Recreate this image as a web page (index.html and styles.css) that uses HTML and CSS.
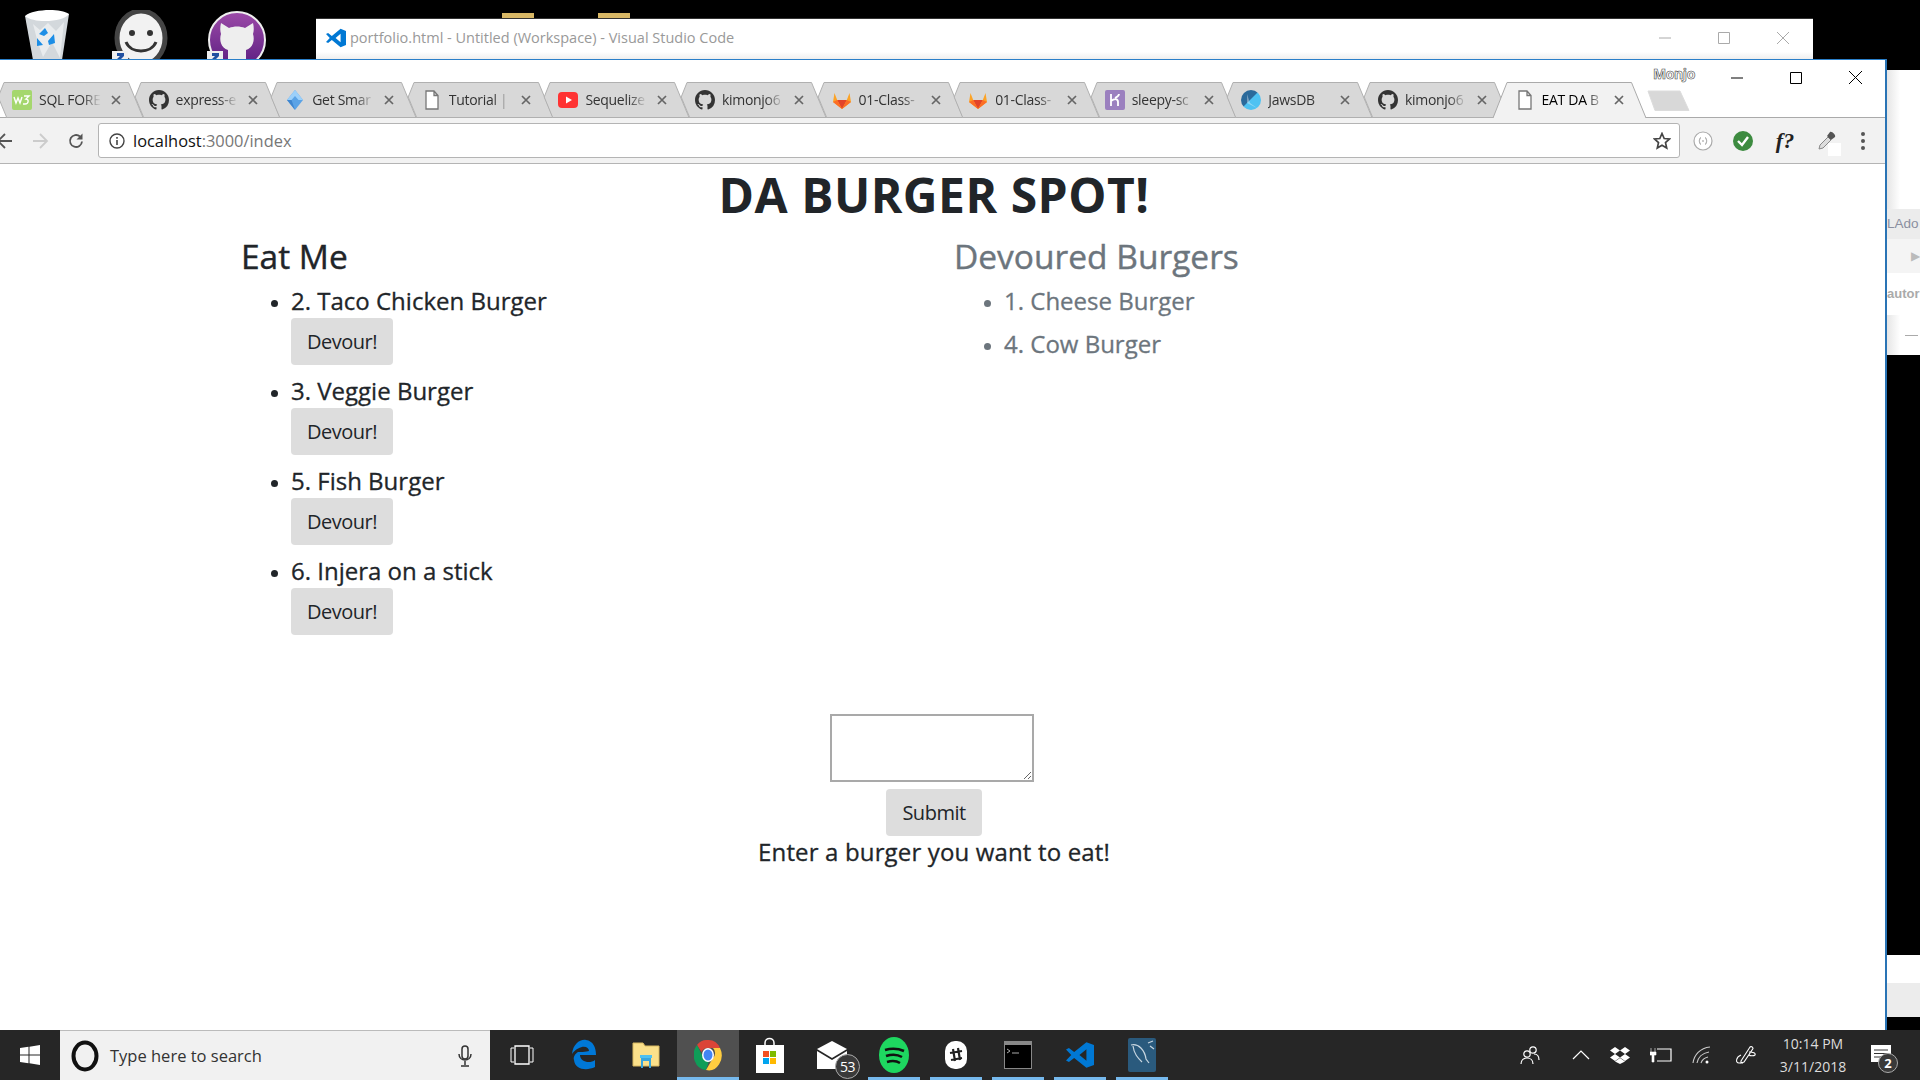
FILE: index.html
```html
<!DOCTYPE html>
<html lang="en">
<head>
<meta charset="utf-8">
<title>DA BURGER SPOT</title>
<link rel="stylesheet" href="styles.css">
</head>
<body>
<svg class="defs" width="0" height="0" aria-hidden="true">
  <symbol id="gh" viewBox="0 0 16 16"><path d="M8 0C3.58 0 0 3.58 0 8c0 3.54 2.29 6.53 5.47 7.59.4.07.55-.17.55-.38 0-.19-.01-.82-.01-1.49-2.01.37-2.53-.49-2.69-.94-.09-.23-.48-.94-.82-1.13-.28-.15-.68-.52-.01-.53.63-.01 1.08.58 1.23.82.72 1.21 1.87.87 2.33.66.07-.52.28-.87.51-1.07-1.78-.2-3.64-.89-3.64-3.95 0-.87.31-1.59.82-2.15-.08-.2-.36-1.02.08-2.12 0 0 .67-.21 2.2.82.64-.18 1.32-.27 2-.27.68 0 1.36.09 2 .27 1.53-1.04 2.2-.82 2.2-.82.44 1.1.16 1.92.08 2.12.51.56.82 1.27.82 2.15 0 3.07-1.87 3.75-3.65 3.95.29.25.54.73.54 1.48 0 1.07-.01 1.93-.01 2.2 0 .21.15.46.55.38A8.013 8.013 0 0016 8c0-4.42-3.58-8-8-8z" fill="currentColor"/></symbol>
  <symbol id="doc" viewBox="0 0 16 20"><path d="M2 1h8l4 4.5V19H2z M10 1v4.5h4" fill="#fff" stroke="#777" stroke-width="1.3"/></symbol>
  <symbol id="x" viewBox="0 0 12 12"><path d="M2 2l8 8M10 2l-8 8" stroke="#666" stroke-width="1.7" fill="none"/></symbol>
  <symbol id="fox" viewBox="0 0 20 20"><path d="M10 19L1 12l1.500-9 2.700 7h9.600l2.700-7 1.500 9z" fill="#fca326"/><path d="M10 19L5.200 10h9.600z" fill="#e24329"/><path d="M10 19L1 12l4.200-2zM10 19l9-7-4.200-2z" fill="#fc6d26"/></symbol>
  <symbol id="tabshape" viewBox="0 0 153 36" preserveAspectRatio="none"><path d="M14 .5H138.500L153 35.500H16.700L8.200 15z" fill="#d8d8d8" stroke="#b0b0b0"/></symbol>
  <symbol id="vsc" viewBox="0 0 24 24"><path d="M17.500 1L24 3.500v17L17.500 23 7 14.500 2.500 18 0 16.700 4.500 12 0 7.300 2.500 6 7 9.500zM17.500 7l-6 5 6 5z" fill="#0078d4"/></symbol>
</svg>

<div class="desktop">
  <div class="desk-icon recycle">
    <svg viewBox="0 0 46 50" width="46" height="50"><path d="M1 6l44-2-7 46H9z" fill="#d3d8dc"/><path d="M1 6C9-1 36-2 45 4c-5 8-35 10-44 2z" fill="#fff"/><path d="M9 14l7 6 8-7 8 8 8-9-4 36-8-16-9 15-5-14z" fill="#e9ecee"/><path d="M15 24l6-6 3 5-4 3zM30 24l1 9-6 2-1-4zM13 28l6 7-6 1z" fill="#1c8ee6"/></svg>
  </div>
  <div class="desk-icon smiley">
    <svg viewBox="0 0 54 50" width="54" height="50"><ellipse cx="27" cy="28" rx="24" ry="27" fill="#f2f2f2" stroke="#444" stroke-width="5"/><circle cx="18" cy="23" r="3" fill="#333"/><circle cx="36" cy="23" r="3" fill="#333"/><path d="M12 32c5 12 25 12 30 0" fill="none" stroke="#333" stroke-width="3"/></svg>
  </div>
  <div class="desk-icon ghcirc">
    <svg class="ghring" viewBox="0 0 60 50" width="60" height="50"><defs><linearGradient id="pg" x1="0" y1="0" x2="0" y2="1"><stop offset="0" stop-color="#9c4aa8"/><stop offset="1" stop-color="#5a1d80"/></linearGradient></defs><circle cx="30" cy="30" r="28" fill="url(#pg)" stroke="#eee" stroke-width="2"/><path d="M14 13l8 5c5-2 11-2 16 0l8-5c1 4 1 8 0 11 2 6 0 14-7 16v10H21V40c-7-2-9-10-7-16-1-3-1-7 0-11z" fill="#eee"/></svg>
  </div>
  <svg class="shortcut shortcut-a" width="16" height="8" viewBox="0 0 16 8"><path d="M0 0h16v8H0z" fill="#eee"/><path d="M5 8l3-3H5V2h7v3l-3 3z" fill="#1f4fa0"/></svg>
  <svg class="shortcut shortcut-b" width="16" height="8" viewBox="0 0 16 8"><path d="M0 0h16v8H0z" fill="#eee"/><path d="M5 8l3-3H5V2h7v3l-3 3z" fill="#1f4fa0"/></svg>
  <div class="desk-folder folder-a"></div>
  <div class="desk-folder folder-b"></div>

  <section class="vscode-window">
    <svg class="vs-logo" width="20" height="20"><use href="#vsc"/></svg>
    <span class="vs-title">portfolio.html - Untitled (Workspace) - Visual Studio Code</span>
    <div class="vs-controls">
      <svg width="12" height="12" viewBox="0 0 12 12"><path d="M0 6h12" stroke="#aaa"/></svg>
      <svg width="12" height="12" viewBox="0 0 12 12"><path d="M.5.5h11v11H.5z" fill="none" stroke="#aaa"/></svg>
      <svg width="12" height="12" viewBox="0 0 12 12"><path d="M0 0l12 12M12 0L0 12" stroke="#aaa"/></svg>
    </div>
  </section>

  <aside class="back-window">
    <div class="bw-head"></div>
    <div class="bw-row bw-title">LAdo</div>
    <div class="bw-row bw-arrow">▶</div>
    <div class="bw-row bw-text">autor</div>
    <div class="bw-row bw-dash"><span></span></div>
  </aside>
  <aside class="back-bottom"></aside>

  <section class="browser">
    <header class="titlebar">
      <span class="profile">Monjo</span>
      <div class="win-controls">
        <svg width="12" height="12" viewBox="0 0 12 12"><path d="M0 6h12" stroke="#000"/></svg>
        <svg width="12" height="12" viewBox="0 0 12 12"><path d="M.5.5h11v11H.5z" fill="none" stroke="#000"/></svg>
        <svg width="13" height="13" viewBox="0 0 13 13"><path d="M0 0l13 13M13 0L0 13" stroke="#000"/></svg>
      </div>
    </header>
    <div class="tabstrip">
      <div class="tab"><svg class="tab-bg"><use href="#tabshape"/></svg><svg class="fav" viewBox="0 0 20 20"><rect width="20" height="20" rx="2" fill="#a5d76e"/><path d="M2 7l2 6 2-5 2 5 2-6M12 6h5l-3 3c3 0 3 5-1 5h-2" fill="none" stroke="#fff" stroke-width="1.400"/></svg><span class="tab-name">SQL FORE</span><svg class="tab-x"><use href="#x"/></svg></div>
      <div class="tab"><svg class="tab-bg"><use href="#tabshape"/></svg><svg class="fav gh-ic"><use href="#gh"/></svg><span class="tab-name">express-e</span><svg class="tab-x"><use href="#x"/></svg></div>
      <div class="tab"><svg class="tab-bg"><use href="#tabshape"/></svg><svg class="fav" viewBox="0 0 20 20"><path d="M10 0l8 10-8 10-8-10z" fill="#5ba3e6"/><path d="M10 0l8 10-4.500 0L10 6l-3.500 4H2z" fill="#9cd0fa"/><path d="M10 20l-8-10 4.500 0z" fill="#3f86cf"/></svg><span class="tab-name">Get Smar</span><svg class="tab-x"><use href="#x"/></svg></div>
      <div class="tab"><svg class="tab-bg"><use href="#tabshape"/></svg><svg class="fav"><use href="#doc"/></svg><span class="tab-name">Tutorial |</span><svg class="tab-x"><use href="#x"/></svg></div>
      <div class="tab"><svg class="tab-bg"><use href="#tabshape"/></svg><svg class="fav" viewBox="0 0 20 20"><rect y="2" width="20" height="16" rx="4" fill="#f33"/><path d="M8 6.500l6 3.500-6 3.500z" fill="#fff"/></svg><span class="tab-name">Sequelize</span><svg class="tab-x"><use href="#x"/></svg></div>
      <div class="tab"><svg class="tab-bg"><use href="#tabshape"/></svg><svg class="fav gh-ic"><use href="#gh"/></svg><span class="tab-name">kimonjo6</span><svg class="tab-x"><use href="#x"/></svg></div>
      <div class="tab"><svg class="tab-bg"><use href="#tabshape"/></svg><svg class="fav"><use href="#fox"/></svg><span class="tab-name">01-Class-</span><svg class="tab-x"><use href="#x"/></svg></div>
      <div class="tab"><svg class="tab-bg"><use href="#tabshape"/></svg><svg class="fav"><use href="#fox"/></svg><span class="tab-name">01-Class-</span><svg class="tab-x"><use href="#x"/></svg></div>
      <div class="tab"><svg class="tab-bg"><use href="#tabshape"/></svg><svg class="fav" viewBox="0 0 20 20"><rect width="20" height="20" rx="2" fill="#9b80bf"/><path d="M6 4v12M6 11c4-3 7-2 7 1v4M14 4c0 2-2 3-4 4" fill="none" stroke="#fff" stroke-width="1.800"/></svg><span class="tab-name">sleepy-sc</span><svg class="tab-x"><use href="#x"/></svg></div>
      <div class="tab"><svg class="tab-bg"><use href="#tabshape"/></svg><svg class="fav" viewBox="0 0 20 20"><defs><linearGradient id="jg" x1="0" y1="0" x2="1" y2="1"><stop offset=".45" stop-color="#2b6a9b"/><stop offset=".5" stop-color="#4ec2f2"/></linearGradient></defs><circle cx="10" cy="10" r="10" fill="url(#jg)"/><path d="M6 4l3 9 7 5-10-5z" fill="#fff" opacity=".35"/></svg><span class="tab-name">JawsDB</span><svg class="tab-x"><use href="#x"/></svg></div>
      <div class="tab"><svg class="tab-bg"><use href="#tabshape"/></svg><svg class="fav gh-ic"><use href="#gh"/></svg><span class="tab-name">kimonjo6</span><svg class="tab-x"><use href="#x"/></svg></div>
      <div class="tab tab-active"><svg class="tab-bg"><path d="M0 36L14 .5H138.500L153 36" fill="#f2f2f2" stroke="#aaa"/></svg><svg class="fav"><use href="#doc"/></svg><span class="tab-name">EAT DA B</span><svg class="tab-x"><use href="#x"/></svg></div>
      <svg class="newtab" width="44" height="22" viewBox="0 0 44 22"><path d="M1 1h32l9 19.500H8z" fill="#d8d8d8" stroke="#dcdcdc"/></svg>
    </div>
    <nav class="toolbar">
      <svg class="nav-ic back" width="18" height="18" viewBox="0 0 18 18"><path d="M16 9H2M9 2L2 9l7 7" fill="none" stroke="#555" stroke-width="1.800"/></svg>
      <svg class="nav-ic" width="18" height="18" viewBox="0 0 18 18"><path d="M2 9h14M9 2l7 7-7 7" fill="none" stroke="#ccc" stroke-width="1.800"/></svg>
      <svg class="nav-ic" width="18" height="18" viewBox="0 0 18 18"><path d="M15 9.500A6 6 0 1 1 13 4.500" fill="none" stroke="#555" stroke-width="1.800"/><path d="M15.500 1.500v6h-6z" fill="#555"/></svg>
      <div class="omnibox">
        <svg width="16" height="16" viewBox="0 0 16 16"><circle cx="8" cy="8" r="7" fill="none" stroke="#444" stroke-width="1.400"/><path d="M8 7v5M8 4v1.800" stroke="#444" stroke-width="1.600"/></svg>
        <span class="url"><b>localhost</b>:3000/index</span>
        <svg class="star" width="18" height="18" viewBox="0 0 18 18"><path d="M9 1.500l2.200 5 5.300.5-4 3.600 1.200 5.400L9 13.200 4.300 16l1.200-5.400-4-3.600 5.300-.5z" fill="none" stroke="#444" stroke-width="1.700"/></svg>
      </div>
      <div class="extensions">
        <svg width="20" height="20" viewBox="0 0 20 20"><circle cx="10" cy="10" r="9" fill="#fff" stroke="#aaa" stroke-width="1.200"/><path d="M8 6.500c-1.500 0-1 3-2 3.500 1 .5.500 3.500 2 3.500M12 6.500c1.500 0 1 3 2 3.500-1 .5-.5 3.500-2 3.500" fill="none" stroke="#999"/><path d="M9 10h2" stroke="#999"/></svg>
        <svg width="20" height="20" viewBox="0 0 20 20"><circle cx="10" cy="10" r="10" fill="#3d8b40"/><path d="M5 10l4 4 6-8" fill="none" stroke="#fff" stroke-width="2.400"/></svg>
        <span class="fx">f?</span>
        <span class="dropper"><svg width="20" height="20" viewBox="0 0 20 20"><path d="M2 18l1-4 8-8 3 3-8 8z" fill="#ddd" stroke="#888"/><path d="M10 5l3-4c2-1 6 3 5 5l-4 3z" fill="#555"/></svg><i class="white-box"></i></span>
        <svg class="kebab" width="6" height="20" viewBox="0 0 6 20"><circle cx="3" cy="3" r="2" fill="#555"/><circle cx="3" cy="10" r="2" fill="#555"/><circle cx="3" cy="17" r="2" fill="#555"/></svg>
      </div>
    </nav>

    <main class="page">
      <h1 class="page-title">DA BURGER SPOT!</h1>
      <div class="columns">
        <div class="col-eat">
          <h2>Eat Me</h2>
          <ul class="burgers">
            <li>2. Taco Chicken Burger<button class="btn" type="button">Devour!</button></li>
            <li>3. Veggie Burger<button class="btn" type="button">Devour!</button></li>
            <li>5. Fish Burger<button class="btn" type="button">Devour!</button></li>
            <li>6. Injera on a stick<button class="btn" type="button">Devour!</button></li>
          </ul>
        </div>
        <div class="col-done">
          <h2>Devoured Burgers</h2>
          <ul class="burgers">
            <li>1. Cheese Burger</li>
            <li>4. Cow Burger</li>
          </ul>
        </div>
      </div>
      <form class="add-form">
        <textarea class="burger-input"></textarea>
        <button class="btn" type="button">Submit</button>
        <p class="form-label">Enter a burger you want to eat!</p>
      </form>
    </main>
  </section>

  <footer class="taskbar">
    <div class="start"><svg width="20" height="20" viewBox="0 0 20 20"><path d="M0 3l8.500-1.200v7.700H0zM9.500 1.700L20 0v9.500H9.500zM0 10.500h8.500v7.700L0 17zM9.500 10.500H20V20L9.500 18.300z" fill="#fff"/></svg></div>
    <div class="search">
      <svg width="28" height="34" viewBox="0 0 28 34"><ellipse cx="14" cy="17" rx="11.500" ry="13.500" fill="none" stroke="#111" stroke-width="4"/></svg>
      <span class="search-text">Type here to search</span>
      <svg class="mic" width="14" height="22" viewBox="0 0 14 22"><rect x="4" y="1" width="6" height="13" rx="3" fill="none" stroke="#333" stroke-width="1.500"/><path d="M1 9c0 8 12 8 12 0M7 16v4M3 21h8" fill="none" stroke="#333" stroke-width="1.500"/></svg>
    </div>
    <div class="task-items">
      <div class="task"><svg width="24" height="22" viewBox="0 0 24 22"><path d="M5 2h14v18H5z" fill="none" stroke="#fff" stroke-width="1.300"/><path d="M4 4H1v14h3M20 4h3v14h-3" fill="none" stroke="#fff" stroke-width="1"/></svg></div>
      <div class="task"><svg width="26" height="32" viewBox="0 0 26 32"><path d="M1 15C2 5 9 0 15 1c7 1 10 7 10 15H9c0 7 10 9 15 5v7c-8 4-20 3-21-7-1-3 1-6 4-8 0 0 9 0 11-1 0-5-9-7-17 3z" fill="#0078d7"/></svg></div>
      <div class="task"><svg width="28" height="26" viewBox="0 0 28 26"><path d="M1 1h10l2 3h14v20H1z" fill="#fbe08a" stroke="#d8b860"/><path d="M9 13h10v13h-2v-7h-6v7H9z" fill="#38a5dd"/><path d="M8 13h12v3H8z" fill="#4fc0f0"/></svg></div>
      <div class="task task-active"><svg width="28" height="32" viewBox="0 0 28 32"><path d="M14 1a13 15 0 0 1 12 8H14a7 7 0 0 0-6.500 4L3 6a13 15 0 0 1 11-5z" fill="#db4437"/><path d="M3 6l6 12a7 7 0 0 0 6 4l-3 9A13 15 0 0 1 3 6z" fill="#0f9d58"/><path d="M26 9a13 15 0 0 1-14 22l7-12a7 7 0 0 0 0-10z" fill="#ffcd40"/><ellipse cx="14" cy="16" rx="6" ry="7" fill="#fff"/><ellipse cx="14" cy="16" rx="4.500" ry="5.500" fill="#4285f4"/></svg></div>
      <div class="task"><svg width="30" height="36" viewBox="0 0 30 36"><path d="M10 9V6c0-6 9-6 9 0v3" fill="none" stroke="#fff" stroke-width="1.500"/><path d="M1 8h28v28H1z" fill="#fff"/><path d="M8 14h6v6H8z" fill="#f25022"/><path d="M15 14h6v6h-6z" fill="#7fba00"/><path d="M8 21h6v6H8z" fill="#00a4ef"/><path d="M15 21h6v6h-6z" fill="#ffb900"/></svg></div>
      <div class="task mail"><svg width="30" height="28" viewBox="0 0 30 28"><path d="M0 8L15 0l15 8-15 9z" fill="#fff"/><path d="M0 10l15 9 15-9v18H0z" fill="#fff"/></svg><span class="mail-badge">53</span></div>
      <div class="task task-open"><svg width="30" height="36" viewBox="0 0 30 36"><ellipse cx="15" cy="18" rx="15" ry="18" fill="#1ed760"/><path d="M6 13c7-2 12-2 19 1M7 19c6-2 11-2 16 1M8 25c5-1.500 9-1.500 13 1" fill="none" stroke="#111" stroke-width="2.600"/></svg></div>
      <div class="task task-open"><svg width="24" height="30" viewBox="0 0 24 30"><rect x="1" y="1" width="22" height="28" rx="10" fill="#fff"/><path d="M9 9l2 12M14 8l2 12M6 13l12-2M7 20l11-2" stroke="#222" stroke-width="2.200"/></svg></div>
      <div class="task task-open"><svg width="28" height="28" viewBox="0 0 28 28"><rect x=".5" y=".5" width="27" height="27" fill="#000" stroke="#888"/><path d="M1 1h26v3H1z" fill="#888"/><path d="M3 8l3 2-3 2M8 12h7" stroke="#aaa" fill="none"/></svg></div>
      <div class="task task-open"><svg width="28" height="36"><use href="#vsc"/></svg></div>
      <div class="task task-open"><svg width="28" height="34" viewBox="0 0 28 34"><rect width="28" height="34" rx="2" fill="#2a5a7d"/><path d="M3 7c8-2 14 6 15 14l3 4M5 8c1 8 5 12 9 16M20 5l5-2M22 8l4 3" fill="none" stroke="#c8d6e0" stroke-width="1.200"/></svg></div>
    </div>
    <div class="tray">
      <svg width="20" height="20" viewBox="0 0 20 20"><circle cx="13" cy="5" r="3.200" fill="none" stroke="#fff" stroke-width="1.200"/><circle cx="7" cy="9" r="3.200" fill="#262626" stroke="#fff" stroke-width="1.200"/><path d="M1 19c0-8 12-8 12 0M14 9c3 0 5 2 5 6" fill="none" stroke="#fff" stroke-width="1.200"/></svg>
      <svg class="tray-chevron" width="18" height="10" viewBox="0 0 18 10"><path d="M1 9l8-8 8 8" fill="none" stroke="#fff" stroke-width="1.200"/></svg>
      <svg width="20" height="18" viewBox="0 0 20 18"><path d="M5 1L0 4.500 5 8l5-3.500zM15 1l-5 3.500L15 8l5-3.500zM5 8l-5 3.500L5 15l5-3.500zM15 8l-5 3.500 5 3.500 5-3.500zM5 15.500L10 18l5-2.500-5-3.500z" fill="#fff"/></svg>
      <svg width="22" height="16" viewBox="0 0 22 16"><path d="M7 2h14v12H7" fill="none" stroke="#fff" stroke-width="1.200"/><path d="M1 1v4M5 1v4M0 5h6v3H4v7H2V8H0z" fill="#fff" stroke="#fff" stroke-width=".6"/></svg>
      <svg width="20" height="18" viewBox="0 0 20 18"><path d="M1 17C2 9 8 2 18 1M5 17c1-5 5-10 12-11M9 17c1-3 3-5 7-6" fill="none" stroke="#ccc" stroke-width="1.100"/><circle cx="15" cy="16" r="1.500" fill="#fff"/></svg>
      <svg class="tray-pen" width="22" height="20" viewBox="0 0 22 20"><path d="M6 16L15 2c1-1 3 0 3 1.500L9 17l-3 1zM14 7c4 0 7 1 6 3-1 1-5 1-6 0M6 10c-5 2-6 8-2 8h4" fill="none" stroke="#fff" stroke-width="1.100"/></svg>
    </div>
    <div class="clock"><span>10:14 PM</span><span>3/11/2018</span></div>
    <div class="notify">
      <svg width="20" height="18" viewBox="0 0 20 18"><path d="M0 0h20v17H0z" fill="#fff"/><path d="M3 5h14M3 8.500h14M3 12h14" stroke="#333"/></svg>
      <span class="notify-badge">2</span>
    </div>
  </footer>
</div>
</body>
</html>
```
FILE: styles.css
```css
* { box-sizing: border-box; }
html, body { margin: 0; padding: 0; }
body { font-family: "Open Sans", "Noto Sans", "Liberation Sans", sans-serif; color: #212529; background: #000; }
.defs { position: absolute; }
.desktop { position: relative; width: 1920px; height: 1080px; overflow: hidden; background: #000; }

/* desktop canvas */
.desk-icon { position: absolute; top: 10px; height: 50px; overflow: hidden; }
.recycle { left: 24px; }
.smiley { left: 114px; }
.ghcirc { left: 207px; }
.shortcut { position: absolute; top: 51px; }
.shortcut-a { left: 112px; }
.shortcut-b { left: 207px; }
.desk-folder { position: absolute; top: 13px; width: 32px; height: 6px; background: #d8b765; }
.folder-a { left: 502px; }
.folder-b { left: 598px; }

.vscode-window { position: absolute; left: 316px; top: 18px; width: 1497px; height: 42px; display: flex; align-items: center; padding: 0 0 4px 10px; background: linear-gradient(#fff 80%, #ececec); border-top: 1px solid #333; }
.vs-logo { flex: none; }
.vs-title { margin-left: 4px; font-size: 14.5px; color: #999; }
.vs-controls { margin-left: auto; display: flex; gap: 47px; padding-right: 24px; }

.back-window { position: absolute; left: 1887px; top: 70px; width: 33px; height: 285px; background: #fafafa; display: flex; flex-direction: column; overflow: hidden; }
.bw-head { height: 139px; flex: none; background: linear-gradient(90deg, #e6e6e6, #fff 40%); }
.bw-row { flex: none; white-space: nowrap; overflow: hidden; }
.bw-title { height: 30px; background: #ececec; font: 13.5px/30px "Liberation Sans", sans-serif; color: #8a8fa0; }
.bw-arrow { height: 34px; background: #f4f4f4; color: #bbb; font-size: 12px; line-height: 34px; text-align: right; }
.bw-text { height: 42px; background: #fff; font: bold 13px/42px "Liberation Sans", sans-serif; color: #aaa; }
.bw-dash { height: 40px; background: linear-gradient(90deg, #e6e6e6, #fff 40%); padding: 20px 0 0 18px; }
.bw-dash span { display: block; width: 13px; border-top: 1px solid #aaa; }
.back-bottom { position: absolute; left: 1887px; top: 955px; width: 33px; height: 62px; background: linear-gradient(#fff 45%, #ececec 45%); }

/* browser */
.browser { position: absolute; left: 0; top: 59px; width: 1887px; height: 971px; background: #fff; border-top: 1px solid #2a7fc9; border-right: 2px solid #2a74b5; overflow: hidden; }
.titlebar { height: 22px; position: relative; }
.profile { position: absolute; left: 1653px; top: 4px; font-size: 14px; letter-spacing: -.4px; font-weight: 700; color: #fff; -webkit-text-stroke: .6px #444; }
.win-controls { position: absolute; left: 1731px; top: 11px; display: flex; align-items: center; gap: 47px; }

.tabstrip { height: 36px; display: flex; margin-left: -10px; position: relative; }
.tabstrip::after { content: ""; position: absolute; left: 0; right: 0; bottom: 0; border-bottom: 1px solid #aaa; }
.tab { flex: none; width: 136.6px; height: 36px; position: relative; display: flex; align-items: center; padding: 0 0 1px 22px; font-size: 14px; z-index: 1; }
.tab-active { z-index: 2; }
.tab-bg { position: absolute; left: 0; top: 0; width: 153px; height: 36px; }
.fav { position: relative; flex: none; width: 20px; height: 20px; color: #333; }
.tab-name { position: relative; margin-left: 7px; width: 62px; overflow: hidden; white-space: nowrap; color: #333; letter-spacing: -.3px; -webkit-mask-image: linear-gradient(90deg, #000 70%, transparent); mask-image: linear-gradient(90deg, #000 70%, transparent); }
.tab-active .tab-name { color: #000; }
.tab-x { position: relative; flex: none; margin-left: 9px; width: 12px; height: 12px; }
.newtab { position: relative; flex: none; align-self: flex-end; margin: 0 0 6px 18px; z-index: 3; }

.toolbar { height: 46px; background: #f2f2f2; border-bottom: 1px solid #b4b4b4; display: flex; align-items: center; padding: 0 0 0 31px; position: relative; }
.nav-ic { flex: none; margin-right: 18px; }
.nav-ic.back { margin-left: -35px; margin-right: 17px; }
.omnibox { position: relative; width: 1582px; height: 35px; margin-left: -5px; background: #fff; border: 1px solid #b4b4b4; border-radius: 3px; display: flex; align-items: center; padding: 0 8px 0 10px; }
.url { margin-left: 8px; font-size: 16.4px; color: #777; }
.url b { font-weight: 400; color: #111; }
.star { margin-left: auto; }
.extensions { flex: none; display: flex; align-items: center; margin-left: 13px; gap: 20px; }
.fx { font: italic bold 22px/20px "Liberation Serif", serif; color: #222; width: 24px; text-align: center; }
.dropper { position: relative; display: block; width: 20px; height: 20px; }
.white-box { position: absolute; left: 11px; top: 12px; width: 13px; height: 13px; background: #fff; }
.kebab { margin-left: 3px; }

.page { display: flex; flex-direction: column; }
.page-title { margin: 2px 0 14px; width: 1868px; text-align: center; font-size: 48px; line-height: 57px; font-weight: 700; letter-spacing: .5px; }
.columns { display: grid; grid-template-columns: 713px 1fr; padding-left: 241px; }
.columns h2 { margin: 0 0 8px; font-size: 33.5px; line-height: 38px; font-weight: 500; -webkit-text-stroke: .4px currentColor; }
.col-done { color: #6c757d; }
.burgers { margin: 0; padding: 0 0 0 50px; list-style: disc; }
.burgers li { font-size: 24px; line-height: 35px; font-weight: 500; margin-bottom: 8px; -webkit-text-stroke: .3px currentColor; }
.burgers li::marker { font-size: 19px; }
.btn { display: block; height: 47px; padding: 0 16px; border: 0; border-radius: 4px; background: #ddd; color: #212529; font: 400 20px "Open Sans", sans-serif; letter-spacing: -.5px; -webkit-text-stroke: 0; }
.add-form { margin-top: 71px; width: 1868px; display: flex; flex-direction: column; align-items: center; }
.burger-input { width: 204px; height: 68px; margin: 0 4px 7px 0; border: 2px solid #a9a9a9; background: #fff; display: block; }
.form-label { margin: 0; font-size: 24px; line-height: 32px; letter-spacing: .15px; font-weight: 500; -webkit-text-stroke: .3px currentColor; }

/* taskbar */
.taskbar { position: absolute; left: 0; bottom: 0; width: 1920px; height: 50px; background: #262626; display: flex; align-items: stretch; color: #fff; }
.start { width: 60px; flex: none; display: flex; align-items: center; justify-content: center; }
.search { width: 430px; flex: none; background: #f1f1f1; border-top: 1px solid #bbb; display: flex; align-items: center; padding: 0 18px 0 11px; gap: 11px; color: #333; }
.search-text { font-size: 16.5px; }
.mic { margin-left: auto; }
.task-items { margin-left: 1px; display: flex; }
.task { flex: none; width: 62px; display: flex; align-items: center; justify-content: center; position: relative; }
.task-active { background: #505050; border-bottom: 3px solid #76b9ed; padding-top: 3px; }
.task-open::after { content: ""; position: absolute; left: 5px; right: 5px; bottom: 0; height: 3px; background: #76b9ed; }
.mail-badge { position: absolute; left: 34px; top: 24px; width: 25px; height: 25px; border-radius: 50%; background: #3a3a3a; border: 1px solid #aaa; font-size: 14px; line-height: 23px; text-align: center; letter-spacing: -.5px; }
.tray { margin-left: 347px; display: flex; align-items: center; gap: 20px; }
.tray-chevron { margin-left: 12px; }
.tray-pen { margin-left: 3px; }
.clock { margin-left: 12px; width: 88px; flex: none; display: flex; flex-direction: column; align-items: center; justify-content: center; gap: 3px; font-size: 14px; line-height: 20px; color: #ddd; }
.notify { position: relative; margin-left: 14px; flex: none; padding-top: 15px; }
.notify-badge { position: absolute; left: 7px; top: 23px; width: 20px; height: 20px; border-radius: 50%; background: #3a3a3a; border: 1px solid #aaa; font-size: 13px; line-height: 18px; text-align: center; font-weight: 700; }
```
